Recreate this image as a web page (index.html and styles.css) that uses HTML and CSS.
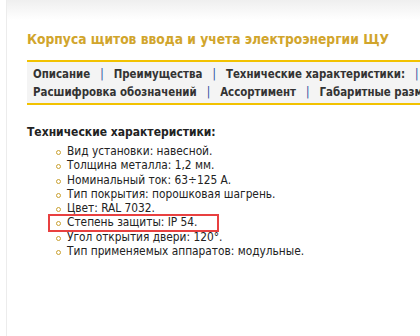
FILE: index.html
```html
<!DOCTYPE html>
<html>
<head>
<meta charset="utf-8">
<link rel="stylesheet" href="styles.css">
</head>
<body>
<div class="page">
  <div class="topbar"></div>
  <div class="content">
    <h1 class="title">Корпуса щитов ввода и учета электроэнергии ЩУ</h1>
    <div class="nav">
      <div class="nav-row"><a>Описание</a><span class="sep">|</span><a>Преимущества</a><span class="sep">|</span><a>Технические характеристики:</a><span class="sep">|</span></div>
      <div class="nav-row"><a>Расшифровка обозначений</a><span class="sep">|</span><a>Ассортимент</a><span class="sep">|</span><a>Габаритные размеры</a></div>
    </div>
    <h2 class="section">Технические характеристики:</h2>
    <ul class="specs">
      <li>Вид установки: навесной.</li>
      <li>Толщина металла: 1,2 мм.</li>
      <li>Номинальный ток: 63÷125 А.</li>
      <li>Тип покрытия: порошковая шагрень.</li>
      <li>Цвет: RAL 7032.</li>
      <li class="marked">Степень защиты: IP 54.</li>
      <li>Угол открытия двери: 120°.</li>
      <li>Тип применяемых аппаратов: модульные.</li>
    </ul>
  </div>
</div>
</body>
</html>
```
FILE: styles.css
```css
html, body {
  margin: 0;
  padding: 0;
  background: #fff;
  overflow: hidden;
}
.page {
  width: 420px;
  height: 336px;
  margin-left: 6px;
  border-left: 1px solid #ececec;
  font-family: "DejaVu Sans", Verdana, sans-serif;
  font-stretch: condensed;
  overflow: hidden;
}
.topbar {
  height: 20px;
  background: linear-gradient(#efefef, #fff);
}
.content {
  padding-left: 20px;
}
.title {
  margin: 11px 0 0 0;
  font-size: 13.7px;
  line-height: 16px;
  font-weight: bold;
  color: #d1a52c;
  white-space: nowrap;
}
.nav {
  margin-top: 13px;
  background: #f4f4f4;
  border-top: 2px solid #f2c200;
  border-bottom: 2px solid #f2c200;
  padding: 3px 0 2px 6px;
  white-space: nowrap;
  overflow: hidden;
}
.nav-row {
  font-size: 11.4px;
  line-height: 18px;
  font-weight: bold;
  color: #333;
}
.sep {
  color: #2a4a9a;
  font-weight: normal;
  padding: 0 10px;
}
.section {
  margin: 19px 0 0 0;
  font-size: 12px;
  line-height: 16px;
  font-weight: bold;
  color: #222;
}
.specs {
  margin: 4px 0 0 0;
  padding-left: 40px;
  list-style: none;
}
.specs li {
  position: relative;
  width: fit-content;
  font-size: 11.8px;
  line-height: 14.3px;
  color: #222;
}
.specs li::before {
  content: "";
  position: absolute;
  left: -11px;
  top: 6px;
  width: 3px;
  height: 3px;
  border: 1px solid #c9a030;
  border-radius: 50%;
}
.marked::after {
  content: "";
  position: absolute;
  left: -19px;
  right: -21px;
  top: -1px;
  bottom: -2px;
  border: 2px solid #e84040;
}
```
